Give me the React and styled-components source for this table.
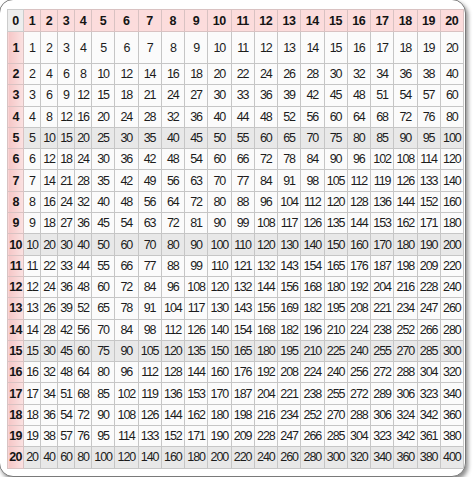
import React from "react";
import styled, { createGlobalStyle } from "styled-components";

const Global = createGlobalStyle`
  html, body {
    margin: 0;
    padding: 0;
    background: #ffffff;
    overflow: hidden;
  }
`;

const Card = styled.div`
  box-sizing: border-box;
  width: 467px;
  height: 478px;
  margin: -1px 0 0 -1px;
  padding: 9px 1px 8px 7px;
  border: 1px solid #7a7a7a;
  border-radius: 14px;
  background: #ffffff;
  box-shadow: 2px 3px 4px rgba(0, 0, 0, 0.45);
`;

const Table = styled.table`
  width: 457px;
  border-collapse: collapse;
  table-layout: fixed;
  font-family: "Liberation Sans", Arial, sans-serif;
  color: #1c1c1c;
`;

const Row = styled.tr`
  height: ${({ $h }) => $h}px;
`;

const Cell = styled.td`
  padding: 0;
  border: 1px solid #c6c6c6;
  text-align: center;
  vertical-align: middle;
  font-size: 12.5px;
  letter-spacing: -1.1px;
  white-space: nowrap;
  overflow: hidden;
  background: ${({ $shade }) => ($shade ? "#e8e8e8" : "#fbfbfb")};
`;

const HeadCell = styled.th`
  padding: 0;
  border: 1px solid #d9c2c2;
  text-align: center;
  vertical-align: middle;
  font-size: 12.5px;
  font-weight: bold;
  letter-spacing: -0.4px;
  color: #141414;
  background: #fcdcdc;
`;

const Corner = styled(HeadCell)`
  background: #eeeeee;
  border-color: #cccccc;
`;

const SideCell = styled(HeadCell)`
  background: linear-gradient(to right, #f5c6c6, #fbe2e2);
  letter-spacing: -0.8px;
`;

const nums = Array.from({ length: 20 }, (_, i) => i + 1);

function rowHeight(r) {
  if (r === 1) return 32;
  return 21.3;
}

export default function App() {
  return (
    <>
      <Global />
      <Card>
        <Table>
          <colgroup>
            <col style={{ width: 16 }} />
            {nums.map((n) => (
              <col key={n} style={n <= 4 ? { width: 17 } : undefined} />
            ))}
          </colgroup>
          <thead>
            <Row $h={22}>
              <Corner>0</Corner>
              {nums.map((n) => (
                <HeadCell key={n}>{n}</HeadCell>
              ))}
            </Row>
          </thead>
          <tbody>
            {nums.map((r) => (
              <Row key={r} $h={rowHeight(r)}>
                <SideCell>{r}</SideCell>
                {nums.map((c) => (
                  <Cell key={c} $shade={r % 5 === 0}>
                    {r * c}
                  </Cell>
                ))}
              </Row>
            ))}
          </tbody>
        </Table>
      </Card>
    </>
  );
}
